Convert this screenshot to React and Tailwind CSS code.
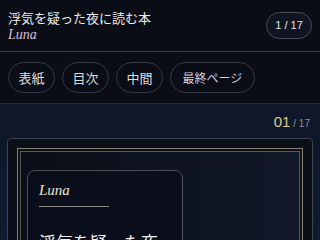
import React from "react";

const serif = { fontFamily: '"Liberation Serif", "Noto Sans CJK JP", serif' };
const sans = { fontFamily: '"Noto Sans CJK JP", "Liberation Sans", sans-serif' };

const navItems = [
	{ label: "表紙", active: false },
	{ label: "目次", active: false },
	{ label: "中間", active: false },
	{ label: "最終ページ", active: true }
];

const App = () => {
	return (
		<div className="w-[320px] h-[240px] overflow-hidden bg-[#0a0d16] text-[#e6e6e6]">
			{/* header */}
			<div className="h-[52px] flex items-center justify-between pl-2 pr-2 border-b border-[#3a3e47]">
				<div className="flex flex-col pt-[1px]">
					<p className="text-[13px] leading-[17px] text-[#ececec]" style={sans}>
						浮気を疑った夜に読む本
					</p>
					<p className="text-[14px] leading-[17px] italic text-[#d9bfd6]" style={serif}>
						Luna
					</p>
				</div>
				<div
					className="h-[27px] w-[46px] flex items-center justify-center rounded-full border border-[#4a4e58] bg-[#0f1421] text-[11px] text-[#e4e4e4]"
					style={{ fontFamily: '"Liberation Sans", sans-serif' }}>
					1 / 17
				</div>
			</div>

			{/* nav */}
			<div className="h-[52px] flex items-center gap-[7px] px-2 border-b border-[#262c38]">
				{navItems.map((item) => (
					<div
						key={item.label}
						className={
							item.active
								? "h-[31px] w-[85px] flex items-center justify-center rounded-full border border-[#353a44] text-[12px] text-[#dccbe0]"
								: "h-[31px] w-[47px] flex items-center justify-center rounded-full border border-[#353a44] text-[13px] text-[#dcdcdc]"
						}
						style={sans}>
						{item.label}
					</div>
				))}
			</div>

			{/* main */}
			<div className="h-[136px] bg-gradient-to-b from-[#0f1729] to-[#101a30] px-[7px] pt-[7px]">
				<div className="flex justify-end items-baseline pr-[3px] h-[24px]">
					<span className="text-[15px] text-[#d8cb8e]" style={{ fontFamily: '"Liberation Sans", sans-serif' }}>
						01
					</span>
					<span className="text-[10px] text-[#8a92a2] ml-[3px]" style={{ fontFamily: '"Liberation Sans", sans-serif' }}>
						/ 17
					</span>
				</div>
				<div className="mt-[3px] h-[200px] rounded-[4px] border border-[#3e434d] bg-[#0b0f18] px-[9px] pt-[9px]">
					<div className="h-full border border-[#8a8570] p-[2px]">
						<div className="h-full border border-[#5a5850] bg-gradient-to-r from-[#0a0e18] to-[#111827] px-[6px] pt-[18px]">
							<div className="w-[156px] h-[120px] rounded-[8px] border border-[#4a4e58] bg-[#0a0e1a] px-[11px] pt-[9px]">
								<p className="text-[15px] leading-[20px] italic text-[#ece4d2]" style={serif}>
									Luna
								</p>
								<div className="mt-[6px] w-[70px] h-px bg-[#8a8a8a]"></div>
								<p className="mt-[23px] text-[17px] leading-[24px] text-[#f0f0f0] whitespace-nowrap" style={sans}>
									浮気を疑った夜
								</p>
							</div>
						</div>
					</div>
				</div>
			</div>
		</div>
	);
};

export default App;
